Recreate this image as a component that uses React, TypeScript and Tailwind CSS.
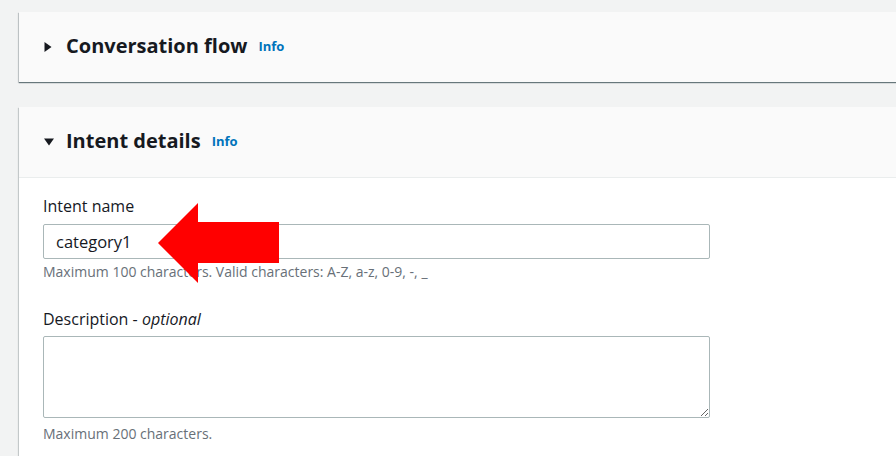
import React from 'react'

const font = { fontFamily: '"Open Sans", "Noto Sans", Arial, sans-serif' }

function Caret({ open }: { open: boolean }) {
  return open ? (
    <svg width="12" height="10" viewBox="0 0 12 10" className="shrink-0">
      <path d="M1 1.5h10L6 8.5z" fill="#16191f" />
    </svg>
  ) : (
    <svg width="10" height="12" viewBox="0 0 10 12" className="shrink-0">
      <path d="M1.5 1v10L8.5 6z" fill="#16191f" />
    </svg>
  )
}

function SectionHeader({ title, open }: { title: string; open: boolean }) {
  return (
    <div className="flex h-[70px] items-center pl-[24px]">
      <div className="flex w-[23px] items-center">
        <Caret open={open} />
      </div>
      <h2 className="-mt-[2px] text-[20px] font-bold leading-none text-[#16191f]">{title}</h2>
      <a className="ml-[11px] text-[13px] font-bold text-[#0073bb]">Info</a>
    </div>
  )
}

export default function App() {
  return (
    <div className="relative h-[456px] w-[896px] overflow-hidden bg-[#f2f3f3]" style={font}>
      <div className="flex flex-col gap-[25px] pl-[19px] pt-[12px]">
        {/* Conversation flow (collapsed) */}
        <div className="w-[1000px] bg-[#fafafa] shadow-[0_1px_1px_0_rgba(0,28,36,0.5),-1px_1px_1px_0_rgba(0,28,36,0.15)]">
          <SectionHeader title="Conversation flow" open={false} />
        </div>

        {/* Intent details (expanded) */}
        <div className="w-[1000px] bg-white shadow-[0_1px_1px_0_rgba(0,28,36,0.3),-1px_1px_1px_0_rgba(0,28,36,0.15)]">
          <div className="border-b border-[#eaeded] bg-[#fafafa]">
            <SectionHeader title="Intent details" open={true} />
          </div>
          <div className="flex flex-col pl-[24px] pt-[18px] pb-[30px]">
            <label className="text-[16px] leading-[20px] text-[#16191f]">Intent name</label>
            <input
              readOnly
              value="category1"
              className="mt-[8px] h-[35px] w-[667px] rounded-[2px] border border-[#aab7b8] bg-white px-[12px] text-[16.5px] text-[#16191f] outline-none"
              style={font}
            />
            <p className="mt-[3px] text-[14px] leading-[19px] text-[#687078]">
              Maximum 100 characters. Valid characters: A-Z, a-z, 0-9, -, _
            </p>
            <label className="mt-[28px] text-[16px] leading-[20px] text-[#16191f]">
              Description - <i>optional</i>
            </label>
            <textarea
              readOnly
              className="mt-[7px] h-[82px] w-[667px] rounded-[2px] border border-[#aab7b8] bg-white px-[12px] py-[6px] text-[15px] outline-none"
              style={font}
            />
            <p className="mt-[6px] text-[14px] leading-[19px] text-[#687078]">Maximum 200 characters.</p>
          </div>
        </div>
      </div>

      {/* annotation arrow */}
      <svg className="pointer-events-none absolute left-0 top-0" width="896" height="456">
        <polygon points="158,243 198,203 198,222 279,222 279,263 198,263 198,283" fill="#ff0000" />
      </svg>
    </div>
  )
}
